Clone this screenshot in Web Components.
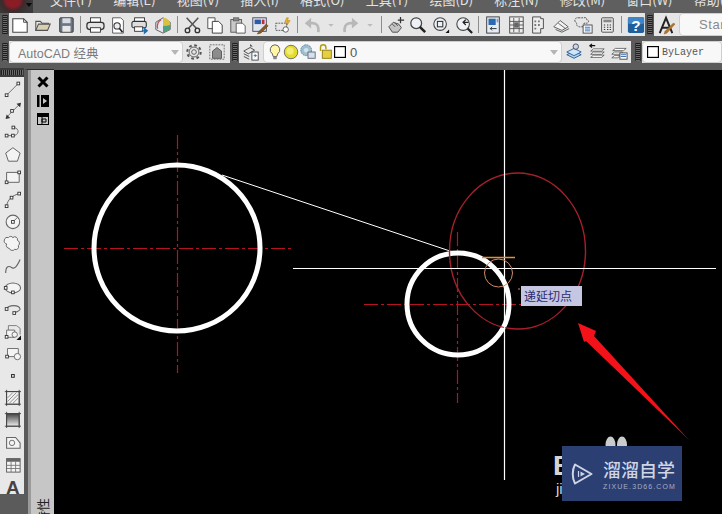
<!DOCTYPE html>
<html>
<head>
<meta charset="utf-8">
<style>
  html, body { margin: 0; height: 100%; overflow: hidden; background: #5b5b5b; }
  body { width: 722px; height: 514px; font-family: "Liberation Sans", "Noto Sans CJK SC", sans-serif; display: flex; flex-direction: column; }
  .row { display: flex; align-items: stretch; flex: none; }
  .main { flex: 1; display: flex; min-height: 0; }
</style>
</head>
<body>
<cad-menubar></cad-menubar>
<div class="row" style="height:23px">
  <cad-toolbar style="width:645px">
    <cad-icon name="new"></cad-icon><cad-icon name="open"></cad-icon><cad-icon name="save"></cad-icon>
    <cad-sep></cad-sep>
    <cad-icon name="print"></cad-icon><cad-icon name="preview"></cad-icon><cad-icon name="publish"></cad-icon><cad-icon name="dwf"></cad-icon>
    <cad-sep></cad-sep>
    <cad-icon name="cut"></cad-icon><cad-icon name="copy"></cad-icon><cad-icon name="paste"></cad-icon><cad-icon name="match"></cad-icon><cad-icon name="block"></cad-icon>
    <cad-sep></cad-sep>
    <cad-icon name="undo"></cad-icon><cad-icon name="drop" style="width:16px"></cad-icon><cad-icon name="redo"></cad-icon><cad-icon name="drop" style="width:16px"></cad-icon>
    <cad-sep></cad-sep>
    <cad-icon name="pan"></cad-icon><cad-icon name="zoom"></cad-icon><cad-icon name="zoomwin"></cad-icon><cad-icon name="zoomprev"></cad-icon>
    <cad-sep></cad-sep>
    <cad-icon name="props"></cad-icon><cad-icon name="center"></cad-icon><cad-icon name="palette"></cad-icon><cad-icon name="sheet"></cad-icon><cad-icon name="markup"></cad-icon><cad-icon name="calc"></cad-icon>
    <cad-sep></cad-sep>
    <cad-icon name="help"></cad-icon>
  </cad-toolbar>
  <cad-toolbar style="flex:1">
    <cad-icon name="textstyle" style="width:24px"></cad-icon>
    <cad-combo style="width:60px;margin-left:1px" label="Stan" tone="stan" arrowless></cad-combo>
  </cad-toolbar>
</div>
<div class="row" style="height:22px;margin-top:5px">
  <cad-toolbar style="width:230px">
    <cad-combo style="width:174px" label="AutoCAD 经典"></cad-combo>
    <cad-icon name="gear"></cad-icon><cad-icon name="lock"></cad-icon>
  </cad-toolbar>
  <cad-toolbar style="width:401px">
    <cad-icon name="layers" style="width:24px"></cad-icon>
    <cad-combo style="width:299px" tone="layer" label="0">
      <cad-icon name="bulb" style="width:16px"></cad-icon><cad-icon name="sun" style="width:16px"></cad-icon><cad-icon name="freeze" style="width:18px"></cad-icon><cad-icon name="padlock" style="width:16px"></cad-icon><cad-icon name="swatch" style="width:14px"></cad-icon>
    </cad-combo>
    <cad-icon name="setlayer" style="width:23px"></cad-icon><cad-icon name="prevlayer" style="width:23px"></cad-icon><cad-icon name="statelayer" style="width:22px"></cad-icon>
  </cad-toolbar>
  <cad-toolbar style="flex:1;margin-left:2px">
    <cad-combo style="width:80px" tone="bylayer" label="ByLayer" arrowless>
      <cad-icon name="swatch" style="width:14px"></cad-icon>
    </cad-combo>
  </cad-toolbar>
</div>
<div class="main" style="margin-top:5px">
  <cad-drawbar></cad-drawbar>
  <cad-palette></cad-palette>
  <cad-canvas></cad-canvas>
</div>
<script>
const ICONS = {
  new: '<path d="M2 3h12l4 4v11H2z" fill="#fff" stroke="#444" stroke-width="1.2"/><path d="M14 3v4h4" fill="none" stroke="#444"/>',
  open: '<path d="M2 16V6h5l2 2h7v2" fill="#e8e8e8" stroke="#555" stroke-width="1.2"/><path d="M2 16l3-7h13l-3 7z" fill="#d8d0b0" stroke="#555" stroke-width="1.2"/>',
  save: '<rect x="3" y="2" width="15" height="16" rx="1" fill="#6d7685" stroke="#333"/><rect x="6" y="2.500" width="9" height="5.500" fill="#d6dbe4"/><rect x="6" y="11" width="9" height="6.500" fill="#e8e8e8"/>',
  print: '<rect x="5" y="2" width="11" height="5" fill="#fff" stroke="#333"/><rect x="1" y="7" width="19" height="8" rx="3" fill="#e4e4e4" stroke="#333" stroke-width="1.4"/><rect x="5" y="13" width="11" height="5" fill="#fff" stroke="#333"/>',
  preview: '<path d="M4 2h9l3 3v14H4z" fill="#fff" stroke="#555"/><circle cx="9" cy="11" r="3.500" fill="#e8eef5" stroke="#333" stroke-width="1.2"/><path d="M11.500 13.500L15 18" stroke="#222" stroke-width="1.8"/>',
  publish: '<rect x="4" y="2" width="11" height="5" fill="#fff" stroke="#333"/><rect x="1" y="6" width="16" height="7" rx="2" fill="#ddd" stroke="#333" stroke-width="1.2"/><rect x="4" y="12" width="9" height="5" fill="#fff" stroke="#333"/><path d="M12 16.500h5M15 14l3 2.500-3 2.500z" stroke="#1f6fb0" fill="#1f6fb0" stroke-width="1.500"/>',
  dwf: '<path d="M2 7l8-5 8 5v8l-8 4-8-4z" fill="#e8e8f0" stroke="#555"/><path d="M10 2a8 7 0 0 1 8 8l-8 1z" fill="#d8c040"/><path d="M10 11l8-1v5l-8 4z" fill="#50a080"/><path d="M8 4a6 8 0 0 0-4 10" fill="none" stroke="#c05050" stroke-width="1.400"/>',
  cut: '<path d="M4 2l11 12M17 2L6 14" stroke="#555" stroke-width="1.700"/><circle cx="5" cy="16" r="2.500" fill="none" stroke="#333" stroke-width="1.500"/><circle cx="16" cy="16" r="2.500" fill="none" stroke="#333" stroke-width="1.500"/>',
  copy: '<path d="M2 2h8v12H2z" fill="#fff" stroke="#555" stroke-width="1.100"/><path d="M7 6h7l4 4v9H7z" fill="#fff" stroke="#444" stroke-width="1.100"/>',
  paste: '<rect x="2" y="4" width="12" height="14" fill="#c9c9c9" stroke="#555"/><rect x="5" y="2" width="6" height="3.500" fill="#888" stroke="#444" stroke-width=".6"/><path d="M8 8h7l3 3v8H8z" fill="#fff" stroke="#555"/>',
  match: '<rect x="2" y="2" width="15" height="15" fill="#dfe6f2" stroke="#445"/><rect x="4" y="4" width="7" height="5" fill="#2a5ba8"/><rect x="12" y="4" width="3" height="5" fill="#c03030"/><path d="M7 20l4-1 8-8-2-2-8 8z" fill="#8a5a24" stroke="#5a3a14" stroke-width=".6"/>',
  block: '<rect x="2" y="8" width="12" height="8" fill="none" stroke="#555" stroke-dasharray="2 1"/><circle cx="13" cy="15" r="3" fill="#fff" stroke="#555"/><path d="M14 2l-2 5h3l-1 4 4-6h-3l1-3z" fill="#e8b020" stroke="#b07808" stroke-width=".5"/>',
  undo: '<path d="M17 18c1-8-3-11-9-10" fill="none" stroke="#b8b8b8" stroke-width="3"/><path d="M9 2L2 8l7 6z" fill="#b8b8b8"/>',
  redo: '<path d="M3 18c-1-8 3-11 9-10" fill="none" stroke="#b8b8b8" stroke-width="3"/><path d="M11 2l7 6-7 6z" fill="#b8b8b8"/>',
  drop: '<path d="M7 9h6l-3 3z" fill="#bbb"/>',
  pan: '<path d="M2 12l5-5 6 2 3 4-4 5H6z" fill="#c4c4c4" stroke="#444"/><path d="M6 9l3 3M9 8l3 3" stroke="#444"/><path d="M15 1v7M12 4.500h7" stroke="#333" stroke-width="1.400"/>',
  zoom: '<circle cx="8" cy="8" r="6" fill="#eef2f6" stroke="#444" stroke-width="1.400"/><path d="M12 12l6 6" stroke="#222" stroke-width="2.800"/>',
  zoomwin: '<circle cx="9" cy="9" r="7" fill="#eef2f6" stroke="#444" stroke-width="1.200"/><rect x="6" y="6" width="6" height="6" fill="none" stroke="#333" stroke-width="1.200"/><path d="M15 19h4v-4z" fill="#111"/>',
  zoomprev: '<circle cx="9" cy="9" r="7" fill="#eef2f6" stroke="#444" stroke-width="1.200"/><path d="M14 14l5 5" stroke="#222" stroke-width="2.400"/><path d="M15 7h-5M12 4L9 7l3 3" fill="none" stroke="#222" stroke-width="1.400"/>',
  props: '<rect x="3" y="1" width="14" height="18" fill="#e4ecf6" stroke="#333"/><rect x="5" y="3" width="8" height="7" fill="#2a6ab0"/><rect x="14" y="3" width="2" height="4" fill="#7aa0c8"/><path d="M14 14H7M9 12l-2 2 2 2" fill="none" stroke="#222"/>',
  center: '<rect x="3" y="1" width="15" height="18" fill="#eee" stroke="#444"/><path d="M7.500 2v16M13.500 2v16M3 6h15M3 10h15M3 14h15" stroke="#555"/><rect x="8" y="7" width="5" height="6" fill="#666"/>',
  palette: '<path d="M4 1h9v2h3v11h-3v5H4z" fill="#ececec" stroke="#444"/><path d="M6 5h2v2H6zM10 5h2v2h-2zM6 9h2v2H6zM10 9h2v2h-2zM6 13h2v2H6z" fill="#777"/>',
  sheet: '<path d="M2 12l7-7 9 7-7 4z" fill="#f4f4f4" stroke="#555"/><path d="M4 15l7 3 8-4M7 8l8 6" fill="none" stroke="#555"/>',
  markup: '<path d="M4 2h6a2 2 0 0 1 3 2 2 2 0 0 1 0 4H10v4H5a3 3 0 0 1-3-4 3 3 0 0 1 2-6z" fill="none" stroke="#444" stroke-dasharray="2 1"/><rect x="9" y="10" width="10" height="9" fill="#fff" stroke="#444"/><path d="M11 12.500h6M11 14.500h6M11 16.500h6" stroke="#2a6ab0"/>',
  calc: '<rect x="4" y="2" width="13" height="16" rx="1" fill="#e8e8e8" stroke="#444"/><rect x="6" y="4" width="9" height="3" fill="#888"/><path d="M6.500 10h1.500M10 10h1.500M13 10h1.500M6.500 12.500h1.500M10 12.500h1.500M13 12.500h1.500M6.500 15h1.500M10 15h1.500M13 15h1.500" stroke="#333" stroke-width="1.200"/>',
  help: '<rect x="1" y="1" width="18" height="18" rx="2" fill="#1f5f9e"/><rect x="1" y="1" width="18" height="8" rx="2" fill="#3f86c6"/><text x="10" y="16.500" font-family="Liberation Sans" font-weight="700" font-size="17" text-anchor="middle" fill="#fff">?</text>',
  textstyle: '<path d="M3 19L10 2l7 17M6 13h8" fill="none" stroke="#222" stroke-width="2.200"/><path d="M8 20l3-1 9-10-2-1-9 9z" fill="#b0742c" stroke="#7a4c14" stroke-width=".5"/>',
  gear: '<circle cx="10" cy="10" r="7.500" fill="none" stroke="#555" stroke-width="2.200" stroke-dasharray="3 2.900"/><circle cx="10" cy="10" r="5.500" fill="none" stroke="#555"/><circle cx="10" cy="10" r="2.600" fill="none" stroke="#555"/>',
  lock: '<path d="M2 2h16v16H2z" fill="none" stroke="#666" stroke-dasharray="2 1.200"/><path d="M5 17V9l5-4 5 4v8z" fill="#8c8c8c" stroke="#555"/>',
  layers: '<path d="M2 9l7-4 5 3-7 4zM2 12l6 3M2 15l6 3" fill="none" stroke="#444"/><path d="M9 1l3 3H9z" fill="#444"/><rect x="11" y="10" width="7" height="9" fill="#fff" stroke="#444"/><path d="M13 14h3M14 12.500l2 1.500-2 1.500" fill="none" stroke="#2a6ab0"/>',
  bulb: '<path d="M10 2a5.500 5.500 0 0 0-3 10l1 3h4l1-3a5.500 5.500 0 0 0-3-10z" fill="#fff6a8" stroke="#555"/><rect x="8" y="15" width="4" height="3" fill="#888"/>',
  sun: '<circle cx="10" cy="10" r="7.500" fill="#e4dc2c" stroke="#666"/><circle cx="9" cy="9" r="4" fill="#f4ee70"/>',
  freeze: '<circle cx="8" cy="8" r="6" fill="#9cc0d0" stroke="#5a8090" stroke-dasharray="2 .8"/><circle cx="8" cy="8" r="2.500" fill="#d4e4ec"/><rect x="10" y="10" width="8" height="7" fill="#d4e0ec" stroke="#667"/>',
  padlock: '<path d="M5 9V5a3 3 0 0 1 6 0v2" fill="none" stroke="#b09a10" stroke-width="1.600"/><rect x="7" y="8" width="10" height="9" fill="#e6d040" stroke="#8a7a10"/>',
  swatch: '<rect x="4" y="4" width="12" height="12" fill="#fff" stroke="#000" stroke-width="1.300"/>',
  setlayer: '<path d="M2 13l8-4 8 4-8 4z" fill="#a8d0f0" stroke="#2a5a90"/><path d="M2 10l8-4 8 4-8 4z" fill="#cfe6fa" stroke="#2a5a90"/><circle cx="12" cy="4" r="3" fill="#c8d8e8" stroke="#445"/>',
  prevlayer: '<path d="M6 10h12l-3 2.500H3zM6 13.500h12l-3 2.500H3zM6 6.500h12l-3 2.500H3z" fill="#fff" stroke="#444" stroke-width=".8"/><path d="M2 3h6M4.500 1L2 3l2.500 2" fill="none" stroke="#111" stroke-width="1.300"/>',
  statelayer: '<path d="M6 6h12l-3 2.500H3zM5 10h9l-2 2.500H2zM5 14h6l-2 2.500H2z" fill="#fff" stroke="#444" stroke-width=".8"/><rect x="11" y="11" width="8" height="7" fill="#fff" stroke="#444"/><path d="M12 13h6M12 15h6" stroke="#2a6ab0"/>',
  line: '<path d="M4 18L17 5" stroke="#666"/><rect x="2.500" y="16.500" width="3" height="3" fill="#fff" stroke="#333"/><rect x="15.500" y="3.500" width="3" height="3" fill="#fff" stroke="#333"/>',
  xline: '<path d="M3 19L19 3" stroke="#666"/><rect x="8.500" y="9.500" width="3" height="3" fill="#fff" stroke="#333"/><path d="M3 20l5-1-4-4zM20 2l-5 1 4 4z" fill="#333"/>',
  pline: '<path d="M4 14h7c7 0 8-8 1-9" fill="none" stroke="#666"/><rect x="2.500" y="12.500" width="3" height="3" fill="#fff" stroke="#333"/><rect x="9.500" y="12.500" width="3" height="3" fill="#fff" stroke="#333"/><rect x="10" y="3.500" width="3" height="3" fill="#fff" stroke="#333"/>',
  polygon: '<path d="M11 3l8 6-3 9H6L3 9z" fill="#f4f4f4" stroke="#666" stroke-width="1.100"/>',
  rect: '<path d="M4 6h14v11H4z" fill="#f4f4f4" stroke="#666" stroke-width="1.100"/><rect x="2.500" y="15.500" width="3" height="3" fill="#fff" stroke="#333"/><rect x="16.500" y="4.500" width="3" height="3" fill="#fff" stroke="#333"/>',
  arc: '<path d="M4 18C5 10 11 6 18 4" fill="none" stroke="#666" stroke-width="1.100"/><rect x="2.500" y="16.500" width="3" height="3" fill="#fff" stroke="#333"/><rect x="8" y="7" width="3" height="3" fill="#fff" stroke="#333"/><rect x="16.500" y="2.500" width="3" height="3" fill="#fff" stroke="#333"/>',
  circle: '<circle cx="11" cy="11" r="7.500" fill="#f4f4f4" stroke="#666" stroke-width="1.200"/><path d="M11 11l5-5" stroke="#666"/><rect x="9.500" y="9.500" width="3" height="3" fill="#fff" stroke="#333"/>',
  cloud: '<path d="M6 4a3 3 0 0 1 5 0 3 3 0 0 1 5 3 3.500 3.500 0 0 1 1 6 3 3 0 0 1-4 4 3.500 3.500 0 0 1-6-1 3.500 3.500 0 0 1-3-5 3.500 3.500 0 0 1 2-7z" fill="#f4f4f4" stroke="#666" stroke-width="1.100"/>',
  spline: '<path d="M3 19c0-9 4-8 7-6s6-2 9-9" fill="none" stroke="#666" stroke-width="1.300"/>',
  ellipse: '<ellipse cx="11" cy="11" rx="8.500" ry="5.500" fill="#f4f4f4" stroke="#666" stroke-width="1.200"/><rect x="1.500" y="9.500" width="3" height="3" fill="#fff" stroke="#333"/><rect x="9.500" y="14.500" width="3" height="3" fill="#fff" stroke="#333"/>',
  earc: '<path d="M4 10c2-5 14-5 15 0 0 2-3 3-6 4" fill="none" stroke="#666" stroke-width="1.200"/><rect x="2.500" y="8.500" width="3" height="3" fill="#fff" stroke="#333"/><rect x="11" y="13" width="3" height="3" fill="#fff" stroke="#333"/>',
  insert: '<path d="M6 9V4h9l4 3v7" fill="none" stroke="#777"/><path d="M4 9h9v8H4z" fill="#f4f4f4" stroke="#666"/><circle cx="13" cy="14" r="3" fill="#f4f4f4" stroke="#666"/><rect x="2.500" y="15" width="3" height="3" fill="#fff" stroke="#333"/><path d="M15 20h5v-5z" fill="#111"/>',
  mkblock: '<path d="M5 5h12v9H5z" fill="#f4f4f4" stroke="#666"/><circle cx="16" cy="14" r="3.500" fill="#f4f4f4" stroke="#666"/><rect x="3" y="12.500" width="3" height="3" fill="#fff" stroke="#333"/>',
  point: '<rect x="9.500" y="9.500" width="3" height="3" fill="#fff" stroke="#333" stroke-width="1.200"/>',
  hatch: '<rect x="4" y="4" width="14" height="14" fill="#f0f0f0" stroke="#444"/><path d="M2 4h18M2 18h18M4 2v18M18 2v18" stroke="#444"/><path d="M5 11l6-6M5 15l10-10M7 17l10-10M11 17l6-6" stroke="#888"/>',
  gradient: '<defs><linearGradient id="g" x1="0" y1="0" x2="0" y2="1"><stop offset="0" stop-color="#444"/><stop offset="1" stop-color="#eee"/></linearGradient></defs><rect x="4" y="4" width="14" height="14" fill="url(#g)" stroke="#444"/><path d="M2 4h18M2 18h18M4 2v18M18 2v18" stroke="#444"/>',
  region: '<path d="M4 5h10l5 6v6H4z" fill="#f4f4f4" stroke="#666" stroke-width="1.200"/><circle cx="10" cy="11" r="3" fill="none" stroke="#666"/>',
  table: '<rect x="4" y="4" width="15" height="15" fill="#f4f4f4" stroke="#555"/><rect x="4" y="4" width="15" height="3.500" fill="#666"/><path d="M4 11.500h15M4 15h15M9 7v12M14 7v12" stroke="#777"/>',
  mtext: '<text x="11" y="19" font-family="Liberation Sans" font-weight="700" font-size="21" text-anchor="middle" fill="#444">A</text>'
};

class CadIcon extends HTMLElement {
  constructor() {
    super();
    this.attachShadow({ mode: "open" });
  }
  connectedCallback() {
    const name = this.getAttribute("name");
    this.shadowRoot.innerHTML = `
      <style>
        :host { display: flex; width: 22.8px; height: 100%; align-items: center; justify-content: center; flex: none; }
        svg { width: 18px; height: 18px; flex: none; }
      </style>
      <svg viewBox="0 0 20 20" overflow="visible">${ICONS[name] || ""}</svg>`;
  }
}
customElements.define("cad-icon", CadIcon);

class CadSep extends HTMLElement {
  constructor() {
    super();
    this.attachShadow({ mode: "open" });
    this.shadowRoot.innerHTML = `
      <style>
        :host { display: block; width: 1px; margin: 3px 2.5px; background: #8d8d8d; flex: none; }
      </style>`;
  }
}
customElements.define("cad-sep", CadSep);

class CadToolbar extends HTMLElement {
  constructor() {
    super();
    this.attachShadow({ mode: "open" });
    this.shadowRoot.innerHTML = `
      <style>
        :host { display: flex; height: 100%; flex: none; background: #5b5b5b; box-sizing: border-box; }
        .grip { width: 6px; margin: 2px 1px 2px 2px; flex: none; background: repeating-linear-gradient(#1e1e1e 0 1px, #6a6a6a 1px 2px); border-left: 1px solid #333; border-right: 1px solid #333; box-sizing: border-box; }
        .body { flex: 1; display: flex; align-items: stretch; background: #e6e6e6; min-width: 0; height: 100%; }
      </style>
      <div class="grip"></div>
      <div class="body"><slot></slot></div>`;
  }
}
customElements.define("cad-toolbar", CadToolbar);

class CadCombo extends HTMLElement {
  constructor() {
    super();
    this.attachShadow({ mode: "open" });
  }
  connectedCallback() {
    const tone = this.getAttribute("tone") || "";
    const fonts = {
      "": 'font: 12.5px "Liberation Sans", "Noto Sans CJK SC", sans-serif; color: #7c7c7c; padding-left: 5px;',
      stan: 'font: 13px "Liberation Sans", sans-serif; color: #8a8a8a; letter-spacing: .6px; padding-left: 16px;',
      layer: 'font: 13px "Liberation Sans", sans-serif; color: #555; padding-left: 3px;',
      bylayer: 'font: 10px "Liberation Mono", monospace; color: #555; padding-left: 2px;'
    };
    const arrow = this.hasAttribute("arrowless") ? "" : `<i></i>`;
    this.shadowRoot.innerHTML = `
      <style>
        :host { display: flex; flex: none; height: 100%; box-sizing: border-box; background: #f8f8f8; border: 1px solid #cfcfcf; border-radius: 4px; align-items: center; position: relative; }
        .lead { display: flex; height: 100%; align-items: center; padding-left: 3px; }
        span { ${fonts[tone]} white-space: nowrap; }
        i { position: absolute; right: 3px; top: 8px; border: 4px solid transparent; border-top: 5px solid #b5b5b5; border-bottom: 0; }
      </style>
      <div class="lead"><slot></slot></div>
      <span>${this.getAttribute("label") || ""}</span>${arrow}`;
  }
}
customElements.define("cad-combo", CadCombo);

class CadMenubar extends HTMLElement {
  constructor() {
    super();
    this.attachShadow({ mode: "open" });
    const items = ["文件(F)", "编辑(E)", "视图(V)", "插入(I)", "格式(O)", "工具(T)", "绘图(D)", "标注(N)", "修改(M)", "窗口(W)", "帮助(H)"];
    this.shadowRoot.innerHTML = `
      <style>
        :host { display: block; height: 13px; flex: none; overflow: hidden; background: #5f5f5f; }
        .wrap { display: flex; height: 13px; }
        .app { width: 33px; height: 13px; background: radial-gradient(circle at 13px 0, #8a1c26 0 7px, #3c2a2c 11px, #3a3a3a 18px); position: relative; flex: none; }
        .app::after { content: ""; position: absolute; right: 1px; top: 3px; border: 3.5px solid transparent; border-top: 4px solid #0a0a0a; border-bottom: 0; }
        ul { list-style: none; display: flex; gap: 21.2px; margin: -7px 0 0 17px; padding: 0; height: 20px; font: 13px "Noto Sans CJK SC", sans-serif; line-height: 14px; color: #e4e4e4; white-space: nowrap; }
      </style>
      <div class="wrap"><div class="app"></div><ul>${items.map((t) => `<li>${t}</li>`).join("")}</ul></div>`;
  }
}
customElements.define("cad-menubar", CadMenubar);

class CadDrawbar extends HTMLElement {
  constructor() {
    super();
    this.attachShadow({ mode: "open" });
    const names = ["line", "xline", "pline", "polygon", "rect", "arc", "circle", "cloud", "spline", "ellipse", "earc", "insert", "mkblock", "point", "hatch", "gradient", "region", "table", "mtext"];
    this.shadowRoot.innerHTML = `
      <style>
        :host { display: block; width: 24px; flex: none; height: 100%; }
        .grip { height: 9px; background: repeating-linear-gradient(90deg, #1e1e1e 0 1px, #6a6a6a 1px 2px); border: 1px solid #3c3c3c; border-width: 2px 1px; box-sizing: border-box; }
        .tools { background: #e8e8e8; height: 417px; display: grid; grid-auto-rows: 22.1px; }
        cad-icon { width: 24px; }
      </style>
      <div class="grip"></div>
      <div class="tools">${names.map((n) => `<cad-icon name="${n}"></cad-icon>`).join("")}</div>`;
  }
}
customElements.define("cad-drawbar", CadDrawbar);

class CadPalette extends HTMLElement {
  constructor() {
    super();
    this.attachShadow({ mode: "open" });
    this.shadowRoot.innerHTML = `
      <style>
        :host { display: flex; flex-direction: column; align-items: center; width: 30px; flex: none; height: 100%; box-sizing: border-box; margin-top: 1px; border-left: 4px solid #5b5b5b; border-top: 1px solid #2a2a2a; background: #c6c6c6; box-shadow: inset 3px 0 #9a9a9a; overflow: hidden; padding: 5px 0 0 4px; }
        svg { display: block; width: 14px; height: 14px; margin-bottom: 4.5px; flex: none; }
        .title { margin-top: 373px; width: 26px; height: 14px; flex: none; transform: rotate(-90deg); font: 13px/14px "Noto Sans CJK SC", sans-serif; color: #222; white-space: nowrap; }
      </style>
      <svg viewBox="0 0 14 14"><path d="M2.500 2.500l9 9M11.500 2.500l-9 9" stroke="#000" stroke-width="3"/></svg>
      <svg viewBox="0 0 14 14"><rect x="1" y="1" width="2.500" height="12"/><path d="M5 1h8v12H5z" fill="#000"/><path d="M7 4l4 3-4 3z" fill="#c6c6c6"/></svg>
      <svg viewBox="0 0 14 14"><path d="M1 1h12v12H1z" fill="#000"/><path d="M2 5h10v7H2z" fill="#c6c6c6"/><path d="M6 7h4v3H6z" fill="none" stroke="#000"/><path d="M6 5v7" stroke="#000"/></svg>
      <div class="title">特性</div>`;
  }
}
customElements.define("cad-palette", CadPalette);

class CadCanvas extends HTMLElement {
  constructor() {
    super();
    this.attachShadow({ mode: "open" });
    this.shadowRoot.innerHTML = `
      <style>
        :host { display: block; flex: 1; height: 444px; margin-top: 2px; background: #000; position: relative; overflow: hidden; }
        svg { display: block; width: 668px; height: 444px; }
        .tip { position: absolute; left: 467px; top: 216px; width: 61px; height: 20px; box-sizing: border-box; padding-left: 3px; background: #c5c6e2; color: #2c2c70; font: 12px/20px "Noto Sans CJK SC", sans-serif; }
        .logo { position: absolute; left: 508px; top: 376px; width: 120px; height: 55px; background: #2b3f72; display: flex; align-items: center; gap: 10px; padding: 0 0 0 9px; box-sizing: border-box; }
        .logo svg { width: 22px; height: 22px; flex: none; }
        .brand { color: #cfd5e4; display: flex; flex-direction: column; }
        .brand b { font: 500 18px "Noto Sans CJK SC", sans-serif; white-space: nowrap; }
        .brand small { font: 7px/9px "Liberation Sans", sans-serif; letter-spacing: 1.1px; color: #a4aec8; white-space: nowrap; }
        .behind { position: absolute; color: #d4d4d4; font: 700 28px/28px "Liberation Sans", sans-serif; left: 499px; top: 382px; }
        .behind2 { position: absolute; color: #d4d4d4; font: 15px/16px "Liberation Sans", sans-serif; left: 502px; top: 411px; }
      </style>
      <svg viewBox="54 70 668 444" fill="none">
        <ellipse cx="610.500" cy="445" rx="5" ry="8.500" fill="#c8cccc"/>
        <ellipse cx="622" cy="445" rx="5" ry="8.500" fill="#c8cccc"/>
        <g stroke="#b5141e" stroke-width="1.200" stroke-dasharray="14 3 3 3">
          <path d="M64 248.500H293M177.500 135V373M364 304.500H522M457.500 232V403"/>
        </g>
        <circle cx="177" cy="248" r="83" stroke="#fff" stroke-width="5"/>
        <circle cx="458" cy="304" r="51" stroke="#fff" stroke-width="5"/>
        <path d="M222 175L456 253" stroke="#fff"/>
        <ellipse cx="517.500" cy="251" rx="68" ry="78" stroke="#a5202c" stroke-width="1.400"/>
        <path d="M504.500 70V480M293 268.500H716" stroke="#fff" stroke-width="1.200"/>
        <path d="M482 257.500H515" stroke="#e0913e" stroke-width="1.500"/>
        <circle cx="498.500" cy="273" r="14" stroke="#d38a68"/>
        <path d="M518 289h2" stroke="#cc8866"/>
        <path d="M578 323L596 331 594 336 689 440 586 341 584 342z" fill="#f3121a"/>
      </svg>
      <div class="behind">E</div>
      <div class="behind2">ji</div>
      <div class="tip">递延切点</div>
      <div class="logo">
        <svg viewBox="0 0 22 22" fill="none"><path d="M4 1.500L20.500 11 4 20.500C1 15 1 7 4 1.500z" stroke="#cfd5e4" stroke-width="2" stroke-linejoin="round"/><path d="M7.500 8v6" stroke="#cfd5e4" stroke-width="1.200"/><path d="M9.500 8.500l4.500 2.500-4.500 2.500z" fill="#cfd5e4"/></svg>
        <div class="brand"><b>溜溜自学</b><small>ZIXUE.3D66.COM</small></div>
      </div>`;
  }
}
customElements.define("cad-canvas", CadCanvas);
</script>
</body>
</html>
